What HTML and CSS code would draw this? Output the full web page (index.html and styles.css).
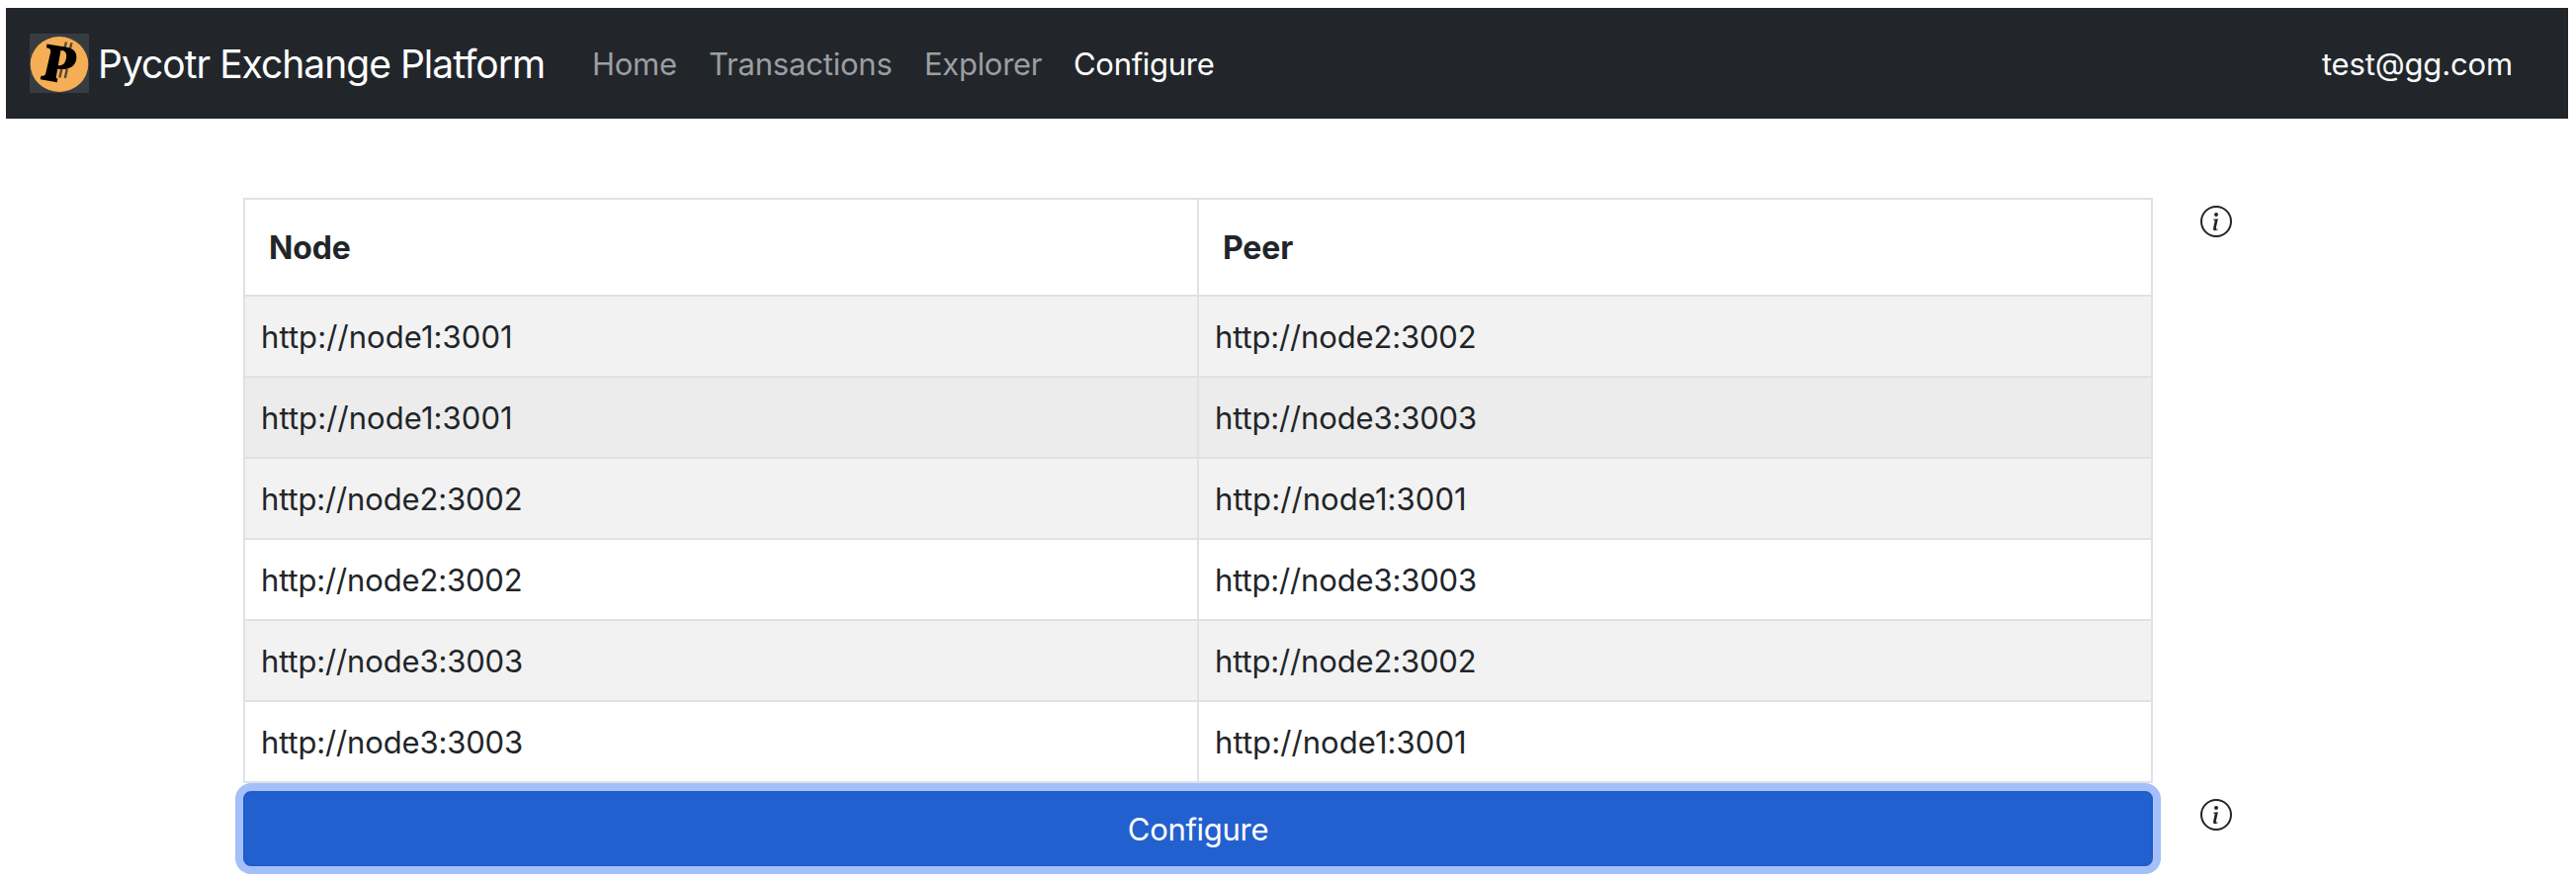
FILE: index.html
```html
<!DOCTYPE html>
<html lang="en">
<head>
<meta charset="utf-8">
<title>Pycotr Exchange Platform</title>
<link rel="stylesheet" href="styles.css">
</head>
<body>
<nav class="navbar">
  <a class="brand">
    <svg class="logo" viewBox="0 0 60 60" aria-hidden="true">
      <rect width="60" height="60" fill="#373c41"/>
      <ellipse cx="30" cy="31" rx="29.3" ry="28" fill="#f5ae56"/>
      <path d="M37 8.500l-1.600 6M42.500 9.200l-1.600 6M32.300 36l-2 8.500M37.800 36l-2 9" fill="none" stroke="#54493a" stroke-width="2.400"/>
      <path fill-rule="evenodd" d="M17.500 10.500L36 13.400C44.500 14.500 48.300 19 47.300 25.500C46.300 33 40 36.500 32 36L28.200 35.700L26.800 43.700C26.600 44.800 27 45.300 28.300 45.500L27.800 49.300L10.800 46.300L11.500 42.800C14.300 43.100 15.600 42.500 16.200 40.300L21.200 18.500C21.600 16 20.500 14.700 17 14.200ZM31.500 17L28.800 32.300C34 32.500 36 30 37 24.500C37.700 19.500 36 17 31.500 17Z"/>
    </svg>
    <span class="brand-name">Pycotr Exchange Platform</span>
  </a>
  <div class="links">
    <a class="link home">Home</a>
    <a class="link transactions">Transactions</a>
    <a class="link explorer">Explorer</a>
    <a class="link active">Configure</a>
  </div>
  <span class="user">test@gg.com</span>
</nav>
<main class="content">
  <table class="peers">
    <thead><tr><th>Node</th><th>Peer</th></tr></thead>
    <tbody>
      <tr><td class="first">http://node1:3001</td><td>http://node2:3002</td></tr>
      <tr class="hovered"><td class="first">http://node1:3001</td><td>http://node3:3003</td></tr>
      <tr><td>http://node2:3002</td><td class="first">http://node1:3001</td></tr>
      <tr><td>http://node2:3002</td><td>http://node3:3003</td></tr>
      <tr><td>http://node3:3003</td><td>http://node2:3002</td></tr>
      <tr><td>http://node3:3003</td><td class="first">http://node1:3001</td></tr>
    </tbody>
  </table>
  <svg class="info" viewBox="0 0 16 16" fill="currentColor"><path d="M8 15A7 7 0 1 1 8 1a7 7 0 0 1 0 14m0 1A8 8 0 1 0 8 0a8 8 0 0 0 0 16"/><path d="m8.930 6.588-2.290.287-.082.380.450.083c.294.070.352.176.288.469l-.738 3.468c-.194.897.105 1.319.808 1.319.545 0 1.178-.252 1.465-.598l.088-.416c-.200.176-.492.246-.686.246-.275 0-.375-.193-.304-.533zM9 4.500a1 1 0 1 1-2 0 1 1 0 0 1 2 0"/></svg>
  <button class="submit">Configure</button>
  <svg class="info" viewBox="0 0 16 16" fill="currentColor"><path d="M8 15A7 7 0 1 1 8 1a7 7 0 0 1 0 14m0 1A8 8 0 1 0 8 0a8 8 0 0 0 0 16"/><path d="m8.930 6.588-2.290.287-.082.380.450.083c.294.070.352.176.288.469l-.738 3.468c-.194.897.105 1.319.808 1.319.545 0 1.178-.252 1.465-.598l.088-.416c-.200.176-.492.246-.686.246-.275 0-.375-.193-.304-.533zM9 4.500a1 1 0 1 1-2 0 1 1 0 0 1 2 0"/></svg>
</main>
</body>
</html>
```
FILE: styles.css
```css
* { box-sizing: border-box; }
body {
  margin: 0;
  min-height: 892px;
  padding: 8px 8px 0 6px;
  background: #fff;
  color: #212529;
  font: 31px/48px Inter, "Liberation Sans", sans-serif;
  letter-spacing: -0.3px;
}
.navbar {
  display: flex;
  align-items: center;
  height: 112px;
  padding: 0 56px 0 24px;
  background: #22262b;
}
.brand { display: flex; align-items: center; color: #fff; }
.logo { width: 60px; height: 60px; }
.brand-name {
  width: 500px;
  padding: 2px 0 0 9px;
  font-size: 39px;
  letter-spacing: -1px;
  white-space: nowrap;
}
.links { display: flex; padding-top: 2px; }
.link { color: #9c9ea0; white-space: nowrap; }
.home { width: 120px; padding-left: 2px; margin-left: 7px; }
.transactions { width: 218px; letter-spacing: -0.2px; }
.explorer { width: 151px; }
.active { color: #fff; }
.user { margin-left: auto; padding-top: 2px; color: #f8f9fa; letter-spacing: -0.15px; }
.content {
  display: grid;
  grid-template-columns: 1932px 32px;
  column-gap: 48px;
  row-gap: 8px;
  padding: 80px 0 16px 240px;
}
.peers {
  width: 100%;
  table-layout: fixed;
  border-collapse: collapse;
}
.peers th, .peers td {
  height: 82px;
  padding: 2px 16px 0;
  border: 2px solid #dee2e6;
  text-align: left;
  letter-spacing: -0.15px;
}
.peers .first { letter-spacing: 0.08px; }
.peers th { height: 98px; padding: 2px 24px 0; font-size: 32px; font-weight: 700; }
.peers tbody tr:nth-child(odd) { background: #f2f2f2; }
.peers tbody .hovered { background: #ececec; }
.info { width: 32px; height: 32px; margin-top: 8px; }
.submit {
  height: 76px;
  padding: 2px 0 0;
  border: 2px solid #225cc4;
  border-radius: 8px;
  background: #2360cf;
  box-shadow: 0 0 0 8px #a3c0fb;
  color: #fff;
  font: inherit;
  letter-spacing: inherit;
}
```
